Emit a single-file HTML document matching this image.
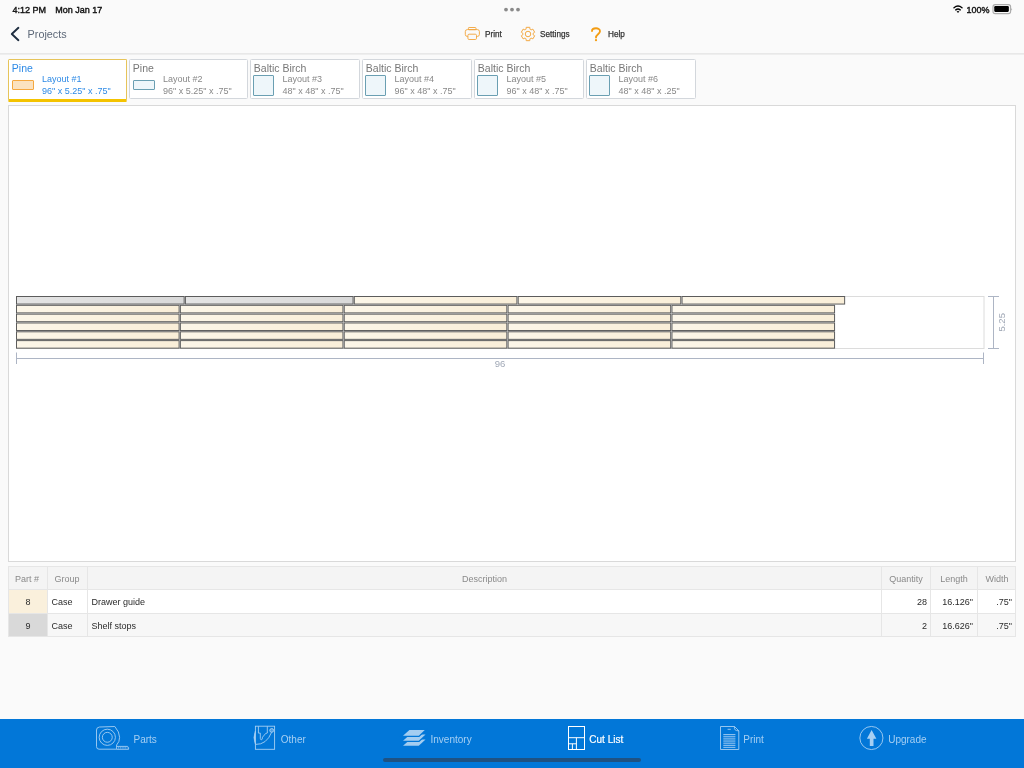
<!DOCTYPE html>
<html><head><meta charset="utf-8">
<style>
*{margin:0;padding:0;box-sizing:border-box}
html,body{width:1024px;height:768px;overflow:hidden;background:#fafafa;font-family:"Liberation Sans",sans-serif;position:relative}
.abs{position:absolute;white-space:nowrap}
.wrap{position:absolute;left:0;top:0;width:1024px;height:768px;will-change:transform}
svg.abs{overflow:visible}
.status{font-weight:normal;font-size:9px;color:#111;line-height:10px;-webkit-text-stroke:0.38px #111}
.navtxt{font-size:8.2px;color:#333;line-height:10px;-webkit-text-stroke:0.25px #333}
.tab{position:absolute;top:59px;height:40px;background:#fff;border:1px solid #d3d7dc;border-radius:1.5px}
.tab.act{border-color:#e6c45a;border-bottom:3px solid #f4c300;height:43px}
.tab .mat{position:absolute;left:2.8px;top:2.3px;font-size:10.5px;color:#777;line-height:12px;white-space:nowrap}
.tab .lay{position:absolute;font-size:9px;color:#888;line-height:10px;white-space:nowrap}
.tab.act .mat,.tab.act .lay{color:#2d8ae6}
.tab .sw{position:absolute;background:#eef6fa;border:1.5px solid #6a9fb2;border-radius:1px}
.tab.act .sw{background:#fbe2c0;border-color:#f5a840}
.content{position:absolute;left:8px;top:105px;width:1008px;height:457px;background:#fff;border:1px solid #d9d9d9}
.tbl{position:absolute;left:8px;top:566px;width:1008px;height:72px;font-size:9px;line-height:10px}
.cell{position:absolute;height:24px;border-right:1px solid #e3e3e3;border-bottom:1px solid #e3e3e3}
.hdr{color:#8a8a8a}
.val{color:#2b2b2b}
.tabbar{position:absolute;left:0;top:719px;width:1024px;height:49px;background:#0277d8}
.tb{position:absolute;font-size:10px;color:#a6cff3;line-height:11px;white-space:nowrap}
</style></head><body><div class="wrap">
<!-- status bar -->
<div class="abs status" style="left:12.6px;top:4.5px">4:12 PM</div>
<div class="abs status" style="left:55.2px;top:4.5px">Mon Jan 17</div>
<svg class="abs" style="left:500px;top:5px" width="24" height="9"><circle cx="6" cy="4.6" r="1.9" fill="#8a8a8a"/><circle cx="12" cy="4.6" r="1.9" fill="#8a8a8a"/><circle cx="18" cy="4.6" r="1.9" fill="#8a8a8a"/></svg>
<svg class="abs" style="left:952px;top:4px" width="12" height="10"><path d="M2 3.7 Q6 0.5 10 3.7" stroke="#000" stroke-width="1.45" fill="none" stroke-linecap="round"/><path d="M3.8 5.9 Q6 4.2 8.2 5.9" stroke="#000" stroke-width="1.45" fill="none" stroke-linecap="round"/><path d="M5.2 7.5 Q6 7.1 6.8 7.5 L6 8.5 Z" fill="#000" stroke="#000" stroke-width="0.8" stroke-linejoin="round"/></svg>
<div class="abs status" style="left:966.6px;top:4.5px">100%</div>
<svg class="abs" style="left:992px;top:4px" width="22" height="11"><rect x="1.0" y="0.6" width="17.6" height="9" rx="2.2" fill="none" stroke="#ababab" stroke-width="1.1"/><rect x="2.25" y="2.1" width="14.6" height="5.8" rx="1.1" fill="#000"/><path d="M19.3 3.9 Q21.1 5.3 19.3 6.7Z" fill="#a0a0a0"/></svg>

<!-- nav -->
<svg class="abs" style="left:8px;top:25px" width="14" height="18"><path d="M10.4 2.8 L3.8 9 L10.4 15.2" stroke="#1f2e40" stroke-width="1.9" fill="none" stroke-linecap="round" stroke-linejoin="round"/></svg>
<div class="abs" style="left:27.6px;top:28px;font-size:10.8px;color:#5d6878;line-height:12px">Projects</div>
<svg class="abs" style="left:464px;top:26px" width="17" height="15" fill="none" stroke="#f2a43a" stroke-width="0.9"><rect x="4.4" y="1.5" width="7.6" height="2.2" rx="0.7"/><rect x="1.3" y="3.6" width="14.1" height="6.8" rx="2"/><rect x="3.9" y="8.2" width="8.6" height="5.3" rx="1.2" fill="#f9f9f9"/></svg>
<div class="abs navtxt" style="left:485px;top:30px">Print</div>
<svg class="abs" style="left:520px;top:26px" width="16" height="16" fill="none" stroke="#f2a43a" stroke-width="0.95"><path d="M6.01 3.31 L6.21 1.34 L9.79 1.34 L9.99 3.31 A5.1 5.1 0 0 1 11.07 3.93 L12.88 3.12 L14.66 6.21 L13.06 7.38 A5.1 5.1 0 0 1 13.06 8.62 L14.66 9.79 L12.88 12.88 L11.07 12.07 A5.1 5.1 0 0 1 9.99 12.69 L9.79 14.66 L6.21 14.66 L6.01 12.69 A5.1 5.1 0 0 1 4.93 12.07 L3.12 12.88 L1.34 9.79 L2.94 8.62 A5.1 5.1 0 0 1 2.94 7.38 L1.34 6.21 L3.12 3.12 L4.93 3.93 A5.1 5.1 0 0 1 6.01 3.31Z" stroke-linejoin="round"/><circle cx="8" cy="8" r="2.75"/></svg>
<div class="abs navtxt" style="left:540px;top:30px">Settings</div>
<svg class="abs" style="left:590px;top:26px" width="12" height="16"><path d="M2 5 C2 1.5 10 1.2 10 5.2 C10 8 6 8.5 6 11.5" stroke="#f39c12" stroke-width="1.85" fill="none" stroke-linecap="round"/><circle cx="6" cy="14.2" r="1.1" fill="#f39c12"/></svg>
<div class="abs navtxt" style="left:608px;top:30px">Help</div>
<svg class="abs" style="left:0;top:50px" width="1024" height="8"><path d="M0 3.85 H1024" stroke="#e2e2e2" stroke-width="1.4"/></svg>

<!-- tabs -->
<div class="tab act" style="left:8px;width:119px">
<div class="mat">Pine</div>
<div class="sw" style="left:3px;top:20.3px;width:21.5px;height:10px"></div>
<div class="lay" style="left:33px;top:14.3px">Layout #1</div>
<div class="lay" style="left:33px;top:25.5px">96" x 5.25" x .75"</div>
</div>
<div class="tab" style="left:129px;width:119px">
<div class="mat">Pine</div>
<div class="sw" style="left:3px;top:20.3px;width:21.5px;height:10px"></div>
<div class="lay" style="left:33px;top:14.3px">Layout #2</div>
<div class="lay" style="left:33px;top:25.5px">96" x 5.25" x .75"</div>
</div>
<div class="tab" style="left:250px;width:110px">
<div class="mat">Baltic Birch</div>
<div class="sw" style="left:2.3px;top:15.2px;width:20.5px;height:20.5px"></div>
<div class="lay" style="left:31.5px;top:14.3px">Layout #3</div>
<div class="lay" style="left:31.5px;top:25.5px">48" x 48" x .75"</div>
</div>
<div class="tab" style="left:362px;width:110px">
<div class="mat">Baltic Birch</div>
<div class="sw" style="left:2.3px;top:15.2px;width:20.5px;height:20.5px"></div>
<div class="lay" style="left:31.5px;top:14.3px">Layout #4</div>
<div class="lay" style="left:31.5px;top:25.5px">96" x 48" x .75"</div>
</div>
<div class="tab" style="left:474px;width:110px">
<div class="mat">Baltic Birch</div>
<div class="sw" style="left:2.3px;top:15.2px;width:20.5px;height:20.5px"></div>
<div class="lay" style="left:31.5px;top:14.3px">Layout #5</div>
<div class="lay" style="left:31.5px;top:25.5px">96" x 48" x .75"</div>
</div>
<div class="tab" style="left:586px;width:110px">
<div class="mat">Baltic Birch</div>
<div class="sw" style="left:2.3px;top:15.2px;width:20.5px;height:20.5px"></div>
<div class="lay" style="left:31.5px;top:14.3px">Layout #6</div>
<div class="lay" style="left:31.5px;top:25.5px">48" x 48" x .25"</div>
</div>

<!-- content -->
<div class="content"></div>
<svg class="abs" style="left:0;top:0" width="1024" height="768">
<defs>
<linearGradient id="c" x1="0" y1="0" x2="1" y2="0"><stop offset="0" stop-color="#fcf6e8"/><stop offset="1" stop-color="#f9eed8"/></linearGradient>
<linearGradient id="g" x1="0" y1="0" x2="1" y2="0"><stop offset="0" stop-color="#e4e4e4"/><stop offset="1" stop-color="#d9d9d9"/></linearGradient>
</defs>
<rect x="16.5" y="296.5" width="967.5" height="52" fill="none" stroke="#dcdcdc" stroke-width="1"/>
<rect x="16.50" y="296.50" width="167.65" height="7.56" fill="url(#g)" stroke="#5c5c5c" stroke-width="1"/>
<rect x="185.41" y="296.50" width="167.65" height="7.56" fill="url(#g)" stroke="#5c5c5c" stroke-width="1"/>
<rect x="354.31" y="296.50" width="162.60" height="7.56" fill="url(#c)" stroke="#5c5c5c" stroke-width="1"/>
<rect x="518.18" y="296.50" width="162.60" height="7.56" fill="url(#c)" stroke="#5c5c5c" stroke-width="1"/>
<rect x="682.04" y="296.50" width="162.60" height="7.56" fill="url(#c)" stroke="#5c5c5c" stroke-width="1"/>
<rect x="16.50" y="305.32" width="162.60" height="7.56" fill="url(#c)" stroke="#5c5c5c" stroke-width="1"/>
<rect x="180.36" y="305.32" width="162.60" height="7.56" fill="url(#c)" stroke="#5c5c5c" stroke-width="1"/>
<rect x="344.23" y="305.32" width="162.60" height="7.56" fill="url(#c)" stroke="#5c5c5c" stroke-width="1"/>
<rect x="508.09" y="305.32" width="162.60" height="7.56" fill="url(#c)" stroke="#5c5c5c" stroke-width="1"/>
<rect x="671.96" y="305.32" width="162.60" height="7.56" fill="url(#c)" stroke="#5c5c5c" stroke-width="1"/>
<rect x="16.50" y="314.15" width="162.60" height="7.56" fill="url(#c)" stroke="#5c5c5c" stroke-width="1"/>
<rect x="180.36" y="314.15" width="162.60" height="7.56" fill="url(#c)" stroke="#5c5c5c" stroke-width="1"/>
<rect x="344.23" y="314.15" width="162.60" height="7.56" fill="url(#c)" stroke="#5c5c5c" stroke-width="1"/>
<rect x="508.09" y="314.15" width="162.60" height="7.56" fill="url(#c)" stroke="#5c5c5c" stroke-width="1"/>
<rect x="671.96" y="314.15" width="162.60" height="7.56" fill="url(#c)" stroke="#5c5c5c" stroke-width="1"/>
<rect x="16.50" y="322.97" width="162.60" height="7.56" fill="url(#c)" stroke="#5c5c5c" stroke-width="1"/>
<rect x="180.36" y="322.97" width="162.60" height="7.56" fill="url(#c)" stroke="#5c5c5c" stroke-width="1"/>
<rect x="344.23" y="322.97" width="162.60" height="7.56" fill="url(#c)" stroke="#5c5c5c" stroke-width="1"/>
<rect x="508.09" y="322.97" width="162.60" height="7.56" fill="url(#c)" stroke="#5c5c5c" stroke-width="1"/>
<rect x="671.96" y="322.97" width="162.60" height="7.56" fill="url(#c)" stroke="#5c5c5c" stroke-width="1"/>
<rect x="16.50" y="331.79" width="162.60" height="7.56" fill="url(#c)" stroke="#5c5c5c" stroke-width="1"/>
<rect x="180.36" y="331.79" width="162.60" height="7.56" fill="url(#c)" stroke="#5c5c5c" stroke-width="1"/>
<rect x="344.23" y="331.79" width="162.60" height="7.56" fill="url(#c)" stroke="#5c5c5c" stroke-width="1"/>
<rect x="508.09" y="331.79" width="162.60" height="7.56" fill="url(#c)" stroke="#5c5c5c" stroke-width="1"/>
<rect x="671.96" y="331.79" width="162.60" height="7.56" fill="url(#c)" stroke="#5c5c5c" stroke-width="1"/>
<rect x="16.50" y="340.61" width="162.60" height="7.56" fill="url(#c)" stroke="#5c5c5c" stroke-width="1"/>
<rect x="180.36" y="340.61" width="162.60" height="7.56" fill="url(#c)" stroke="#5c5c5c" stroke-width="1"/>
<rect x="344.23" y="340.61" width="162.60" height="7.56" fill="url(#c)" stroke="#5c5c5c" stroke-width="1"/>
<rect x="508.09" y="340.61" width="162.60" height="7.56" fill="url(#c)" stroke="#5c5c5c" stroke-width="1"/>
<rect x="671.96" y="340.61" width="162.60" height="7.56" fill="url(#c)" stroke="#5c5c5c" stroke-width="1"/>
<g stroke="#adb5c4" stroke-width="1" fill="none">
<path d="M16.5 358.5 H983.5"/><path d="M16.5 352.5 V364"/><path d="M983.5 352.5 V364"/>
<path d="M993.5 296.5 V348.5"/><path d="M988 296.5 H999"/><path d="M988 348.5 H999"/>
</g>
<text x="500" y="367.3" font-family="Liberation Sans" font-size="9.5" fill="#a0a8b6" text-anchor="middle">96</text>
<text transform="translate(1005.2 322.3) rotate(-90)" font-family="Liberation Sans" font-size="9.5" fill="#a0a8b6" text-anchor="middle">5.25</text>
</svg>

<!-- table -->
<div class="tbl">
 <div class="abs" style="left:0;top:0;width:1008px;height:71px;border:1px solid #e6e6e6;background:#fff"></div>
 <div class="abs" style="left:0;top:0;width:1008px;height:24px;background:#f4f4f4;border:1px solid #e6e6e6"></div>
 <div class="abs" style="left:0;top:47px;width:1008px;height:24px;background:#f7f7f7;border:1px solid #e6e6e6"></div>
 <div class="abs" style="left:0;top:23px;width:40px;height:25px;background:#faf0dc;border:1px solid #e6e6e6"></div>
 <div class="abs" style="left:0;top:47px;width:40px;height:24px;background:#d9d9d9;border:1px solid #e6e6e6"></div>
 <div class="abs" style="left:39px;top:0;width:1px;height:71px;background:#e6e6e6"></div>
 <div class="abs" style="left:79px;top:0;width:1px;height:71px;background:#e6e6e6"></div>
 <div class="abs" style="left:873px;top:0;width:1px;height:71px;background:#e6e6e6"></div>
 <div class="abs" style="left:922px;top:0;width:1px;height:71px;background:#e6e6e6"></div>
 <div class="abs" style="left:969px;top:0;width:1px;height:71px;background:#e6e6e6"></div>
 <div class="abs hdr" style="left:-1px;top:8px;width:40px;text-align:center">Part #</div>
 <div class="abs hdr" style="left:39px;top:8px;width:40px;text-align:center">Group</div>
 <div class="abs hdr" style="left:80px;top:8px;width:793px;text-align:center">Description</div>
 <div class="abs hdr" style="left:874px;top:8px;width:48px;text-align:center">Quantity</div>
 <div class="abs hdr" style="left:923px;top:8px;width:46px;text-align:center">Length</div>
 <div class="abs hdr" style="left:970px;top:8px;width:38px;text-align:center">Width</div>
 <div class="abs val" style="left:0;top:31px;width:40px;text-align:center">8</div>
 <div class="abs val" style="left:43.6px;top:31px">Case</div>
 <div class="abs val" style="left:83.6px;top:31px">Drawer guide</div>
 <div class="abs val" style="left:874px;top:31px;width:45px;text-align:right">28</div>
 <div class="abs val" style="left:923px;top:31px;width:42px;text-align:right">16.126"</div>
 <div class="abs val" style="left:970px;top:31px;width:34px;text-align:right">.75"</div>
 <div class="abs val" style="left:0;top:55px;width:40px;text-align:center">9</div>
 <div class="abs val" style="left:43.6px;top:55px">Case</div>
 <div class="abs val" style="left:83.6px;top:55px">Shelf stops</div>
 <div class="abs val" style="left:874px;top:55px;width:45px;text-align:right">2</div>
 <div class="abs val" style="left:923px;top:55px;width:42px;text-align:right">16.626"</div>
 <div class="abs val" style="left:970px;top:55px;width:34px;text-align:right">.75"</div>
</div>

<!-- tab bar -->
<div class="tabbar"></div>
<svg class="abs" style="left:0;top:719px" width="1024" height="49" fill="none" stroke="#a6cff3" stroke-width="0.9">
 <!-- parts -->
 <path d="M96.5 11 Q96.5 8.3 99.5 8 L114.8 7.5 Q119.6 13 119.6 18.3 Q119.6 23 116.6 26 V30.2 H99 Q96.5 30.2 96.5 27.5 Z"/>
 <circle cx="107.3" cy="18.3" r="8.1"/>
 <circle cx="107.3" cy="18.3" r="4.95"/>
 <path d="M116.6 27.4 H127.6 L128.6 28.6 V30.3 H116.6"/>
 <path d="M118 28.9 H127.6" stroke-dasharray="1.1 0.7"/>
 <!-- other -->
 <rect x="255.4" y="7.2" width="19.2" height="23.1"/>
 <path d="M258.4 7.2 V14.1 H260.3 V19.4 Q260.6 21 261.5 20.8 Q262.4 20.6 262.5 18.2 L264.4 16 L265.6 14.5 L267.3 14 V7.2"/>
 <path d="M255.6 25.4 Q266.5 25.8 271.6 13.3"/>
 <circle cx="271.7" cy="11.4" r="1.9" fill="rgba(166,207,243,0.45)"/>
 <path d="M255.4 12 Q252.4 18.6 255.4 25.2 Q254.6 18.6 255.4 12 Z" fill="#a6cff3" stroke-width="0.6"/>
 <!-- cut list -->
 <g stroke="#ffffff" stroke-width="1"><rect x="568.5" y="7.5" width="16" height="23"/><path d="M568.5 18.7 H584.5 M576.4 18.7 V30.5 M568.5 24.8 H576.4 M572.4 24.8 V30.5"/></g>
 <!-- print -->
 <path d="M720.5 7.5 H734.5 L738.8 11.8 V30.5 H720.5 Z"/>
 <path d="M734.5 7.5 Q733.6 12 738.8 11.8"/>
 <path d="M727.6 10.3 H730.8"/>
 <path d="M723.3 15.50 H735.4 M723.3 17.34 H735.4 M723.3 19.19 H735.4 M723.3 21.04 H735.4 M723.3 22.88 H735.4 M723.3 24.73 H735.4 M723.3 26.57 H735.4 M723.3 28.41 H735.4" stroke-width="0.85"/>
 <!-- upgrade -->
 <circle cx="871.4" cy="19" r="11.55"/>
 <path d="M871.6 11 L876.4 19.7 H873.5 V26.9 H869.8 V19.7 H866.9 Z" fill="#a6cff3" stroke="none"/>
 <!-- inventory -->
 <g>
 <path d="M410.18 20.40 H425.53 L418.75 26.70 H403 Z" fill="#a3cdf1" stroke="#0277d8" stroke-width="2.6" paint-order="stroke"/>
 <path d="M410.18 15.40 H425.53 L418.75 21.70 H403 Z" fill="#a3cdf1" stroke="#0277d8" stroke-width="2.6" paint-order="stroke"/>
 <path d="M409.40 11.06 H424.75 L418.75 16.66 H403 Z" fill="#a3cdf1" stroke="#0277d8" stroke-width="2.6" paint-order="stroke"/>
 </g>
</svg>
<div class="tb" style="left:133.5px;top:733.8px">Parts</div>
<div class="tb" style="left:280.8px;top:733.8px">Other</div>
<div class="tb" style="left:430.5px;top:733.8px">Inventory</div>
<div class="tb" style="left:589.3px;top:733.8px;color:#fff;-webkit-text-stroke:0.2px #fff">Cut List</div>
<div class="tb" style="left:743.3px;top:733.8px">Print</div>
<div class="tb" style="left:888.2px;top:733.8px">Upgrade</div>
<div class="abs" style="left:383px;top:758px;width:258px;height:4px;border-radius:2px;background:#1f5283"></div>
</div></body></html>
